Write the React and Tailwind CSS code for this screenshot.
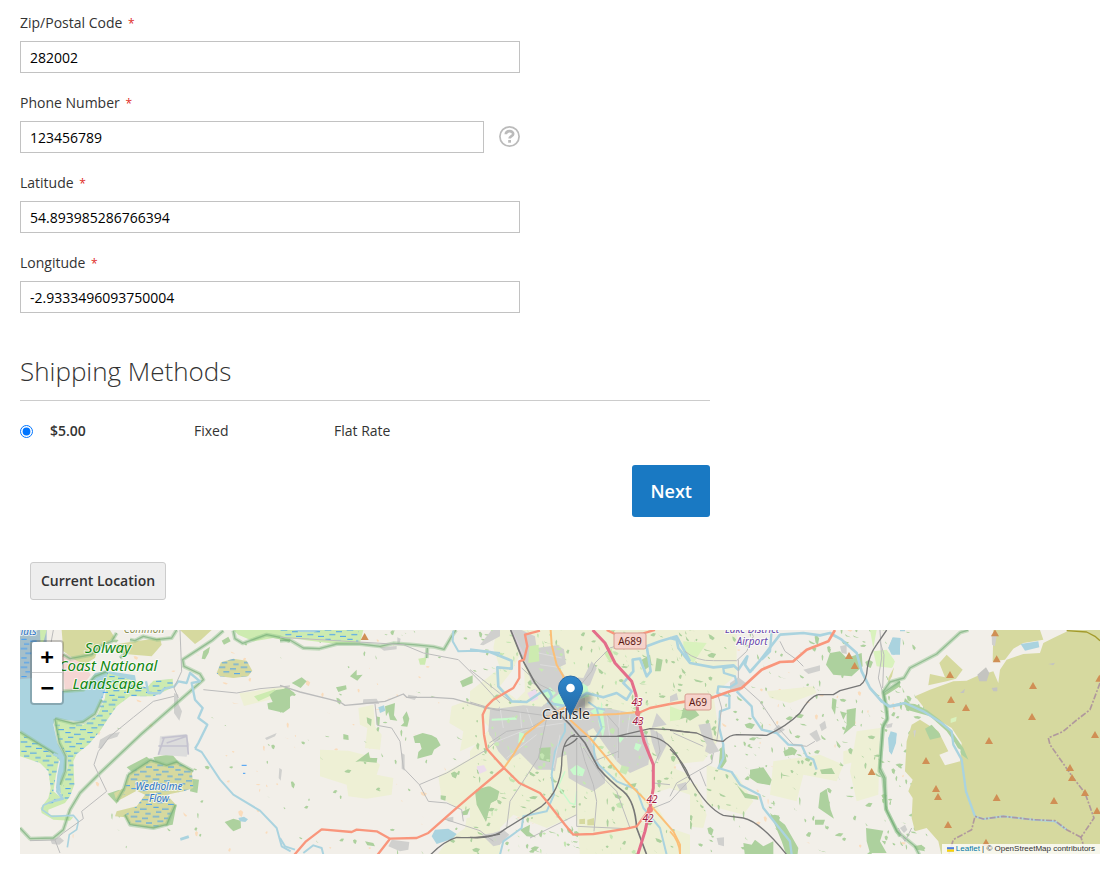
import { useState } from 'react';

// Map sheets: each one is drawn in its own coordinates and shifted by dx.
const LAND = '#f2efe9';
const FARM = '#eef0d5';
const WOOD = '#add19e';
const HEATH = '#d6d99f';
const WATER = '#aad3df';
const GRASS = '#cdebb0';
const TOWN = '#d0d0ce';
const PARK = '#c8facc';
const MARSH = 'url(#marsh)';
const GREY = '#bcbcbc';
const RAIL = '#777777';
const TRUNK = '#f9967c';
const PRIMARY = '#fbbf77';
const MOTORWAY = '#e46d8a';

const SHEETS = [
  {
    dx: 0,
    areas: [
      ['#a5bfca', 'M0 6 H80 V150 L40 160 L0 155Z'],
      [GRASS, 'M60 6 H80 L72 36 L62 60Z'],
      [WATER, 'M0 154 L40 150 L130 190 L190 185 L225 135 L258 128 L345 142 L348 160 L310 150 L262 170 L245 215 L225 255 L190 282 L105 272 L100 290 L112 345 L136 385 L138 420 L122 460 L126 500 L108 480 L112 440 L120 400 L100 378 L60 350 L0 310Z'],
      ['#f5d6d3', 'M125 78 L165 78 L190 105 L212 140 L180 185 L135 190Z'],
      [HEATH, 'M125 6 H270 L285 30 L235 60 L225 90 L195 108 L170 98 L130 70Z'],
      [HEATH, 'M280 50 L330 42 L420 30 L425 50 L395 85 L340 80 L290 75Z'],
      [HEATH, 'M480 6 H575 L545 34 L525 48Z'],
      [GRASS, 'M262 135 L345 160 L380 180 L400 158 L458 152 L460 178 L400 205 L330 205 L290 235 L262 275 L240 310 L205 350 L170 378 L160 400 L163 470 L150 505 L135 525 L85 545 L85 560 L160 568 L150 578 L100 575 L65 555 L62 540 L85 510 L92 480 L85 430 L60 405 L0 385 V312 L60 350 L95 378 L118 390 L108 440 L100 490 L125 510 L120 470 L144 420 L144 385 L118 345 L104 290 L108 274 L190 290 L232 262 L255 210Z'],
      [MARSH, 'M262 135 L345 160 L380 180 L400 158 L458 152 L460 178 L400 205 L330 205 L290 235 L262 275 L240 310 L205 350 L170 378 L160 400 L163 470 L150 505 L135 525 L120 520 L144 420 L144 385 L118 345 L104 290 L190 290 L232 262Z'],
      [MARSH, 'M0 315 L60 350 L118 390 L108 440 L100 490 L120 520 L85 530 L92 480 L85 430 L60 405 L0 385Z'],
      [MARSH, 'M0 30 H68 V70 L30 90 V155 H0Z'],
      [WOOD, 'M320 418 L380 386 L395 398 L340 436Z M400 388 L455 378 L478 404 L470 416 L410 408Z M515 452 L537 455 L532 495 L510 490Z M262 497 L298 485 L308 500 L290 527Z M450 548 L470 528 L458 590 L436 594Z'],
      [HEATH, 'M345 425 L395 395 L440 412 L470 402 L515 425 L520 480 L490 490 L440 500 L468 530 L445 570 L440 590 L400 600 L330 590 L315 568 L285 565 L290 550 L350 535 L375 500 L350 488 L310 510 L290 520 L282 495 L312 480 L325 440Z'],
      [MARSH, 'M345 425 L395 395 L440 412 L470 402 L515 425 L520 480 L490 490 L440 500 L468 530 L445 570 L440 590 L400 600 L330 590 L315 560 L350 535 L375 500 L350 488 L310 500 L325 440Z'],
      [HEATH, 'M590 135 L603 103 L640 92 L680 98 L697 128 L684 145 L640 150 L600 145Z'],
      [MARSH, 'M590 135 L603 103 L640 92 L680 98 L697 128 L684 145 L600 145Z'],
      ['#dcdcdc', 'M420 325 L498 318 L508 350 L500 386 L415 380Z'],
      [TOWN, 'M235 360 L240 335 L270 318 L300 312 L292 326 L262 336 L245 362Z M462 195 L475 200 L474 225 L486 250 L478 278 L462 255Z M90 634 L120 628 L132 638 L118 650 L96 648Z M735 330 L770 315 L765 325 L740 336Z M778 420 L786 425 L782 458 L776 450Z'],
      [FARM, 'M658 196 L775 178 L810 175 V200 L672 234Z'],
      [GRASS, 'M702 205 L765 184 L768 196 L715 220Z'],
      [WOOD, 'M748 200 L768 186 L810 180 V240 L790 254 L745 244 L742 226 L758 222Z M614 582 L640 572 L662 578 L663 600 L640 610 L630 600Z M605 38 L625 26 L632 40 L612 50Z M550 70 L570 56 L566 74 L555 94 L545 92Z'],
      [GRASS, 'M640 6 H810 V40 L760 30 L700 40 L655 20Z'],
      [WATER, 'M655 570 L672 566 L684 574 L676 582 L660 580Z M480 630 L505 622 L508 630 L482 638Z'],
    ],
    parkEdges: [
      'M0 600 L30 632 L100 630 L130 605 L150 545 L180 495 L240 435 L360 322 L550 155 L540 138 L492 115 L488 95 L575 38 L610 8',
      'M130 80 L150 92 L215 80 L240 55 L275 40 L290 15 M300 90 L318 75 M330 35 L345 38 L370 25 L410 35 L455 30 L470 6',
      'M130 190 L190 185 L225 145 L262 130 M105 272 L160 286 L190 282 L225 258 L245 215 M105 272 L118 345 L138 385 L136 430 L120 470 M0 312 L60 350 L112 382',
      'M640 8 L645 32 L668 46 L740 20 L780 28 L810 40',
      'M325 440 L392 396 L440 412 L470 402 L520 430 M315 560 L330 590 L400 600 L440 590 L466 530 M290 520 L312 482 L325 440',
    ],
    lines: [
      [WATER, 8, 'M100 378 L128 390 L118 440 L112 490 L128 512 L98 520'],
      [WATER, 5, 'M98 520 L70 532 L66 545 L95 565 L160 562 L175 580 L170 605 L148 620 L142 658'],
      [WATER, 7, 'M378 160 L385 195 L420 196 L432 182 L462 176 L475 160 L500 165 L510 135 L540 160 L515 165 L525 215 L548 240 L535 270 L562 290 L535 345 L525 362'],
      [WATER, 6, 'M525 362 L545 372 L600 455 L640 500 L720 548 L770 600 L785 655 L812 670'],
      [GREY, 3, 'M480 6 L485 130 L462 180 L475 210 M462 205 L400 220 L340 268 L270 325 L235 370 L222 410 L260 490 L185 550 L190 572 L130 615 L105 636 L30 638 M105 636 L120 675 M550 185 L650 195 L720 182 L810 174 M100 6 L92 50'],
      ['#c4c2cf', 5, 'M415 354 L505 354 M425 330 L500 322 L505 380 M432 330 L415 380 M440 345 L500 325'],
      ['#3f9cf5', 3, 'M665 412 H680 M669 436 H676'],
    ],
  },
  {
    dx: 780,
    areas: [
      [GRASS, 'M0 6 H250 L240 45 L170 48 L90 38 L0 26Z'],
      [MARSH, 'M0 6 H235 L235 42 L90 32 L0 26Z'],
      [WATER, 'M40 6 H125 L100 13 L60 12Z'],
      [FARM, 'M120 365 L205 368 L270 385 L300 410 L290 440 L340 450 L335 500 L260 512 L205 505 L200 470 L120 445Z'],
      [FARM, 'M235 240 L280 230 L285 295 L305 320 L300 365 L255 360 L262 300 L240 290Z'],
      [FARM, 'M515 235 L600 205 L610 235 L608 340 L540 370 L550 310 L508 285Z'],
      [FARM, 'M475 445 L600 375 L660 410 V684 H470 L500 640 L555 600 L560 570 L620 560 L530 540 L485 510Z'],
      [WOOD, 'M0 190 L20 178 L45 196 L20 214 L18 235 L0 255Z M35 165 L65 148 L80 160 L62 180Z M168 178 L198 172 L200 184 L175 192Z M226 402 L266 372 L270 390 L292 390 L290 404 L240 400Z M315 235 L345 225 L342 262 L352 278 L330 275 L325 252 L318 265Z M368 268 L380 250 L388 272 L382 296 L362 294 L372 284Z M400 325 L428 315 L455 322 L470 330 L482 352 L462 365 L456 380 L412 392 L415 372 L425 362 L420 345 L405 345Z M540 160 L578 142 L578 165 L548 178Z M588 485 L625 475 L635 485 L655 492 L650 515 L632 525 L618 580 L595 530Z M260 268 L275 274 L273 295 L262 285Z M288 265 L300 268 L298 292 L290 290Z M190 318 L205 322 L206 336 L190 334Z M482 502 L498 504 L496 518 L482 514Z M255 640 L280 645 L285 655 L262 652Z M545 552 L570 540 L562 560 L548 562Z M210 145 L230 125 L230 142 L248 140 L232 158Z'],
      [GRASS, 'M415 92 L440 88 L435 110 L420 110Z'],
      [WATER, 'M295 238 L312 232 L316 248 L300 255Z M455 625 L465 605 L505 602 L530 618 L518 632 L470 648Z'],
      [TOWN, 'M250 214 L290 212 L298 228 L248 228Z M298 58 L350 54 L350 64 L312 68Z M352 28 L362 32 L358 50 L352 48Z M365 375 L374 380 L374 428 L365 422Z M600 50 L635 6 H660 V25 L610 52Z M335 635 L388 642 L385 665 L360 670 L325 655Z M628 275 L660 235 V355 L628 320Z M498 570 L520 566 L520 582 L504 580Z M605 620 L660 612 V650 L640 655Z M385 200 L412 205 L404 216 L382 210Z'],
      ['#ecdcec', 'M590 415 L612 412 L620 428 L598 438Z'],
    ],
    parkEdges: ['M0 38 L30 36 L70 60 L118 62 L170 48 L240 48 L300 55 L340 46 L400 50 L460 56 L492 64 L515 25 L528 6 M442 60 L440 90'],
    lines: [
      [WATER, 6, 'M520 8 L518 40 L535 70 L590 68 L660 75 M0 630 L15 655 L45 665 M70 675 L100 652 L125 660 L130 680'],
      [GREY, 4, 'M0 172 L60 192 L150 214 L180 222 L195 232 L240 228 L315 220 L370 198 L380 208 L460 208 L520 212 L620 240 L660 248'],
      [GREY, 3, 'M285 228 L292 292 L335 300 L360 340 L370 420 L418 470 L445 520 L500 525 L545 545 L550 580 M418 470 L500 435 L620 365 L660 330 M0 28 L370 50 L430 75 L535 95 L600 160 L660 225 M490 572 L600 608 L640 640'],
      [RAIL, 4, 'M452 680 Q490 640 530 628 Q600 632 660 618'],
    ],
  },
  {
    dx: 1350,
    areas: [
      [FARM, 'M80 6 H660 V120 L620 130 L660 190 V340 L610 420 L660 440 V684 H330 L320 560 L230 600 L130 560 L90 600 L0 620 V370 L60 300 L0 240 V190 L90 120 L70 60Z'],
      [LAND, 'M540 500 L600 480 L660 500 V620 L600 600Z M160 60 L125 130 L90 175 L140 215 L165 190Z'],
      [TOWN, 'M125 6 H155 L195 25 L200 60 L262 52 L282 64 L288 108 L268 118 L285 145 L340 150 L365 100 L380 120 L360 170 L330 190 L345 210 L345 240 L410 240 L500 258 L512 300 L530 325 L540 370 L535 410 L480 435 L440 400 L400 345 L370 300 L352 310 L385 400 L405 440 L405 465 L370 490 L330 470 L296 450 L290 380 L262 390 L255 430 L240 425 L200 425 L150 375 L112 400 L85 370 L55 310 L60 245 L160 232 L215 236 L235 220 L210 180 L185 165 L165 100 L145 70Z'],
      [TOWN, 'M540 300 L575 320 L590 350 L565 400 L545 340Z M70 615 L100 605 L118 620 L90 650 L72 640Z M560 255 L590 290 L545 300Z'],
      [WOOD, 'M208 360 L242 358 L240 402 L208 395Z M15 490 L60 475 L88 490 L82 515 L62 525 L48 582 L20 530Z M515 95 L540 80 L545 110 L525 125Z M560 90 L578 95 L572 130 L555 130Z M150 605 L180 590 L178 612 L198 628 L170 625Z M615 250 L650 245 L660 265 L625 275Z M470 470 L500 465 L495 478Z'],
      [GRASS, 'M178 55 L206 50 L208 100 L175 105Z M402 75 L425 60 L432 95 L420 105Z'],
      [PARK, 'M215 190 L240 178 L258 195 L240 212 L218 205Z M245 215 L275 190 L290 225 L262 240Z M330 160 L352 175 L358 205 L322 215Z M395 220 L405 300 L398 330 L385 280Z M360 250 L385 235 L405 250 L375 262Z M300 425 L320 410 L345 425 L338 445 L310 440Z M65 272 L140 268 L140 275 L65 278Z M497 345 L515 350 L505 370 L492 362Z M440 325 L462 330 L450 345Z M148 312 L166 318 L162 342 L145 345Z'],
      ['#c9e8b5', 'M75 340 L88 345 L85 355 L72 352Z M205 120 L222 124 L215 132Z M455 412 L478 418 L468 440 L448 432Z'],
      [HEATH, 'M328 574 L345 572 L345 588 L328 588Z M352 575 L372 570 L372 592 L352 592Z'],
      ['#ecdcec', 'M20 420 L40 412 L50 426 L30 436Z M172 195 L198 182 L205 212 L185 222Z'],
    ],
    parkEdges: [],
    lines: [
      [PARK, 4, 'M285 430 L265 475 L300 525 L315 530 L320 490'],
      [WATER, 8, 'M0 65 L60 72 L125 98 L125 122 L82 118 L85 175 L125 220 L170 222 L210 195 L235 185 L245 205 L235 225 L290 235 L350 195 L400 208 L440 195 L470 215 L485 190 L460 165 L490 130 L488 95 L510 92 L530 145 L542 130 L530 55 L570 40 L620 25 L660 100'],
      [WATER, 6, 'M285 285 L285 310 L255 370 L245 440 L252 500 L230 550 L160 565 L155 600 L100 640 L90 680 M380 240 L395 300 L370 340 L375 400 L440 460 L500 485 L520 540 L570 600 L590 680 M355 222 L380 240 L405 245'],
      ['#e2e2e2', 2, 'M70 345 L180 300 L280 285 M110 390 L200 320 M150 250 L155 300 M205 75 L275 90 M210 110 L280 120 M410 260 L420 330 M450 250 L440 400 M330 350 L400 440 M480 260 L470 330 M170 240 L190 300 M90 240 L100 300 M270 320 L250 420'],
      [GREY, 3, 'M0 125 L120 220 M0 222 L60 240 L220 262 L290 270 M58 345 L110 310 L180 300 L240 265 M230 270 L205 390 L120 520 L110 600 L75 620 M320 330 L320 595 M330 345 L345 400 L370 470 L380 520 L372 610 M340 360 L400 450 L440 490 L480 600 M320 595 L470 602 M325 180 L365 130 L375 105 L420 60 L450 50 M155 120 L210 170 L250 190 M410 260 L445 300 L445 390 M445 370 L370 400 M560 310 L570 370 L545 430 M600 470 L550 465 M550 540 L600 520 L660 455 M180 630 L320 560'],
      ['#dcd0dc', 6, 'M122 6 L160 80'],
      [RAIL, 5, 'M122 6 L160 100 L195 165 L250 240 L300 290 L345 345 L385 420 Q420 460 460 490 Q495 520 500 600 L530 680'],
      [RAIL, 4, 'M0 628 Q70 635 110 600 L215 535 Q270 490 275 410 Q275 330 315 320 M285 355 Q310 345 322 330 M300 325 L440 325 L540 302 L600 305 L660 313 M440 325 L540 325 Q600 335 630 400 L660 455'],
      [PRIMARY, 6, 'M242 6 L245 50 L260 110 L280 145 L290 235 L230 270 L165 320 L130 380 L102 420 M290 235 L360 262 L440 258 L505 252 M300 275 L360 330 L470 460 L540 530 L610 610 L630 650 L630 684'],
    ],
  },
  {
    dx: 1950,
    areas: [
      [FARM, 'M0 6 H200 V140 L130 200 L150 330 L100 400 L0 410Z M290 190 L430 175 L440 195 L360 225 L300 210Z M310 400 L450 380 L520 410 L500 460 L400 440 L380 520 L300 500Z M560 310 L630 300 L625 500 L560 520 L540 430Z M110 410 L200 440 L250 520 L220 560 L110 530Z M0 440 L80 470 L110 560 L100 600 L0 590Z M520 370 L560 360 V400 L520 410Z'],
      ['#d9f2bd', 'M40 40 L110 45 L90 75 L70 105 L40 80Z M0 235 L40 250 L30 275 L0 280Z M610 70 L650 65 L672 95 L665 120 L620 115Z M600 6 H620 L610 60Z'],
      [HEATH, 'M655 150 L672 118 L666 145 L655 165Z'],
      [WOOD, 'M480 75 L510 70 L530 90 L575 75 L578 115 L545 145 L490 140 L468 110Z M530 245 L558 240 L555 290 L520 320 L530 290Z M487 210 L500 215 L495 260 L485 240Z M240 425 L280 418 L305 455 L300 472 L262 465 L240 450Z M450 495 L470 482 L482 545 L492 572 L445 540Z M588 600 L640 608 L630 640 L650 675 H600 L590 640Z M220 645 L245 650 L255 635 L280 655 L310 640 L310 684 H225Z M300 555 L345 590 L385 660 L382 684 H350 L335 640Z M145 425 L150 370 L160 345 L170 400 L155 422Z M200 470 L225 495 L262 505 L265 515 L225 510Z M435 575 L465 575 L460 590 L435 590Z M340 370 L365 358 L368 380 L345 385Z M450 425 L485 420 L495 438 L455 438Z M40 240 L75 245 L88 262 L60 278 L35 260Z M640 200 L690 160 V175 L650 200Z M510 250 L530 255 L520 275Z'],
      [TOWN, 'M85 290 L120 285 L130 340 L148 370 L120 378 L105 370 L110 350 L95 320Z M180 165 L205 148 L228 165 L210 190 L180 192Z M400 125 L450 112 L450 128 L415 138Z M448 290 L465 278 L470 300 L455 310Z M310 305 L325 290 L345 305 L325 318Z M418 318 L440 305 L452 335 L440 342Z M510 55 L530 50 L530 78 L515 75Z M20 470 L48 462 L52 485 L30 488Z M140 630 L162 628 L162 655 L145 650Z M0 205 L20 195 L25 215 L0 222Z'],
      [WATER, 'M655 60 L668 30 L690 30 V80 L665 80Z M655 330 L662 310 L680 315 L678 345 L665 380 L657 370Z'],
    ],
    parkEdges: ['M690 160 L640 195 L652 270 L640 290 L628 430 L640 450 L648 545 L690 625'],
    lines: [
      [WATER, 8, 'M0 30 L20 35 L25 60 L60 105 L130 118 L190 112 L205 125 L232 85 L225 110 L240 132 L268 100 L330 20 L400 15 L450 22 L480 15 L515 35 L560 75 L575 130 L590 160 L600 180 L635 220 L660 235 L690 230'],
      [WATER, 7, 'M305 6 L300 70 L275 95 M190 115 L160 120 L162 135 L195 145 L200 165 L180 178 L145 175 L142 195 L178 205 L178 240 L150 250 L148 300 L160 350 L160 390 L145 420 L185 432 L210 470 L268 500 L280 540 L320 590 L360 640 L365 680 M200 190 L245 235 L248 265 L275 305 L320 315 L355 350 L395 352 L410 385 L430 395 L440 425'],
      [GREY, 3, 'M45 70 Q80 100 130 98 H200 L230 70 L250 25 L240 6 M205 95 V150 M220 175 L270 220 L320 295 L370 350 L410 355 L435 340 M145 205 L155 240 L140 340 M10 315 L100 355 M130 375 L125 405 L20 465 L0 505 M90 430 L108 475 M630 6 L635 90 L625 150 L640 200 M330 40 L345 70 L380 95 L400 115'],
      [RAIL, 4, 'M0 307 L80 315 Q130 340 160 340 Q180 320 200 320 L290 322 Q350 295 390 255 Q420 205 445 200 L490 200 L510 188 L570 172 Q590 160 592 120 Q598 80 620 50 L650 6'],
      [RAIL, 4, 'M0 363 Q40 400 60 450 Q110 540 160 562 L220 570 Q270 580 350 680'],
      [TRUNK, 8, 'M0 228 L50 220 L130 208 L180 190 L215 180 L275 125 L330 102 L370 100 L410 65 L475 40 L495 6'],
      [PRIMARY, 5, 'M0 610 Q30 640 30 684'],
    ],
  },
  {
    dx: 2580,
    areas: [
      [HEATH, 'M105 205 L150 185 L220 160 L260 158 L290 145 L340 130 L355 165 L360 125 L380 95 L430 78 L480 75 L490 45 L520 30 L570 6 H660 V684 H185 L175 640 L158 620 L140 600 L105 610 L95 570 L98 510 L85 490 L98 455 L75 430 L80 340 L95 290 L120 275 L175 310 L205 370 L178 380 L195 412 L240 400 L245 345 L215 300 L150 262Z'],
      [HEATH, 'M178 105 L200 80 L248 125 L228 152 L200 160 L145 172 L150 138 L195 148Z M340 12 V6 H480 L490 35 L430 45 L400 62 L375 95 L338 100Z'],
      [WOOD, 'M135 302 L155 290 L180 318 L182 328 L150 335Z M70 225 L105 228 L140 245 L180 275 L215 310 L250 360 L265 395 L245 380 L225 345 L200 310 L150 265 L80 245Z M75 210 L90 225 L70 230Z M100 655 L125 650 L135 670 L110 665Z M5 638 L18 640 L15 650Z'],
      ['#d9f2bd', 'M5 90 L20 75 L45 100 L38 118 L5 115Z M212 272 L230 266 L228 280 L212 285Z'],
      [LAND, 'M215 350 L242 365 L238 400 L222 390Z'],
      [TOWN, 'M335 20 L350 25 L345 55 L336 50Z M60 600 L75 590 L82 605 L72 615Z M18 290 L38 285 L35 298 L20 300Z M100 308 L108 306 L104 330Z'],
      ['#c4c4c0', 'M292 140 L318 118 L328 135 L320 160 L298 160Z M335 180 L352 178 L352 190 L340 190Z M240 195 L255 182 L252 195Z M505 108 L525 104 L520 112Z'],
      [WATER, 'M25 60 L38 28 L62 30 L60 60 L42 82Z M422 48 L475 40 L478 58 L435 68Z M25 330 L35 312 L50 318 L45 345 L35 378 L28 370Z M60 6 H75 V10 H60Z'],
    ],
    parkEdges: ['M265 6 L240 14 L170 78 L90 120 L72 150 L30 162 L10 190 L20 240 L22 275 L8 300 L0 420 L15 450 L18 542 L50 610 L105 655 L118 680'],
    lines: [
      [WATER, 7, 'M0 215 L25 235 L75 225 L130 250 L185 285 L215 310 L220 350 L245 395 L258 490 L285 565'],
      [WATER, 6, 'M285 565 L310 573 L370 565 L460 575 L525 580 L560 605'],
      ['#a39b2c', 4, 'M560 8 L620 12 L645 25 L660 38'],
      [GREY, 3, 'M0 40 L12 80 L8 180 M55 600 L75 640 L95 600'],
    ],
    borders: [
      'M660 165 L630 245 L585 280 L550 310 L505 330 L510 350 L580 450 L615 495 L642 570 L603 628 L610 650',
      'M603 628 L560 605 L525 578 L460 575 L370 565 L310 573 L285 565 L275 605 L220 635 L205 684',
    ],
  },
];

const TRUNK_ROADS =
  'M820 684 L858 640 L905 604 L995 612 L1010 605 L1070 610 L1110 632 L1190 630 L1225 615 L1310 540 L1350 505 L1452 420 L1400 362 L1392 320 L1388 260 L1400 235 L1420 215 L1480 180 L1498 150 L1498 100 L1512 95 L1522 55 L1515 20 L1560 8 M1110 632 L1070 684 M1452 420 L1498 465 L1560 495 L1580 520 L1635 590 L1660 620 L1720 618 L1820 602 L1850 595 L1865 575 L1888 545 M1855 255 L1890 240 L1950 228 M1760 6 L1800 25 L1870 16 L1905 6';
const MOTORWAY_ROAD = 'M1718 6 L1755 45 L1785 105 L1835 160 L1848 200 L1855 270 L1872 340 L1900 410 L1900 480 L1888 550 L1875 610 L1852 684';

const PEAKS = [
  [1034, 27], [2487, 84], [2504, 114], [2555, 432], [2925, 16], [2930, 94], [2790, 141], [2793, 216], [2838, 240],
  [3039, 174], [3036, 267], [2907, 339], [2718, 399], [2748, 483], [2754, 507], [2930, 510], [3102, 519],
  [3225, 321], [3150, 420], [3156, 450], [3195, 495], [3231, 549], [2784, 591], [2898, 644], [3238, 152],
];

// Repeatable pseudo random numbers, so the copses and hamlets stay in place.
function scatter(count, seed, minX, maxX, size) {
  let s = seed;
  const next = () => {
    s = (s * 16807) % 2147483647;
    return s / 2147483647;
  };
  const shapes = [];
  for (let i = 0; i < count; i++) {
    const x = minX + next() * (maxX - minX);
    const y = next() * 684;
    const w = size * (0.4 + next() * next() * 2.6);
    const h = size * (0.3 + next() * next() * 2);
    const tilt = (next() - 0.5) * size * 1.6;
    shapes.push(`M${x} ${y} l${w * 0.5} ${tilt} l${w * 0.5} ${h * 0.4} l${-w * 0.3} ${h * 0.6 - tilt} l${-w * 0.5} ${-h * 0.3}Z`);
  }
  return shapes.join(' ');
}

const COPSES =
  scatter(70, 77, 780, 1400, 9) + scatter(260, 4242, 1350, 2000, 10) + scatter(300, 919, 1950, 2720, 11) + scatter(30, 31, 250, 800, 8);
const HAMLETS = scatter(170, 1234, 120, 2720, 8);
const CITY_GREENS = scatter(170, 555, 1410, 1880, 8);

const LABEL_FONT = "font-['Noto_Sans','Open_Sans',sans-serif]";

function MapDrawing() {
  return (
    <svg
      viewBox="0 0 1080 224"
      preserveAspectRatio="xMidYMid slice"
      className="block h-full w-full"
      role="img"
      aria-label="Map of Carlisle"
    >
      <defs>
        <pattern id="marsh" width="66" height="56" patternUnits="userSpaceOnUse">
          <path d="M2 6 H22 M36 11 H54 M16 20 H34 M48 25 H66 M4 34 H20 M30 39 H50 M12 48 H28 M46 53 H62" stroke="#3f9cf5" strokeWidth="3" />
        </pattern>
        <linearGradient id="pin" x1="0" y1="0" x2="0" y2="1">
          <stop offset="0" stopColor="#2e86cb" />
          <stop offset="1" stopColor="#2369a5" />
        </linearGradient>
        <filter id="soft" x="-50%" y="-50%" width="200%" height="200%">
          <feGaussianBlur stdDeviation="2" />
        </filter>
      </defs>
      <rect width="1080" height="224" fill={LAND} />

      <g transform="scale(0.33333) translate(0 -6)" fill="none" strokeLinejoin="round">
        <path d={HAMLETS} fill="#fadcbc" />
        {SHEETS.map(sheet => (
          <g key={sheet.dx} transform={`translate(${sheet.dx} 0)`}>
            {sheet.areas.filter(([color]) => color === FARM).map(([color, d], i) => (
              <path key={i} d={d} fill={color} />
            ))}
          </g>
        ))}
        <path d={COPSES} fill={WOOD} />
        {SHEETS.map(sheet => (
          <g key={sheet.dx} transform={`translate(${sheet.dx} 0)`}>
            {sheet.areas.filter(([color]) => color !== FARM).map(([color, d], i) => (
              <path key={i} d={d} fill={color} />
            ))}
          </g>
        ))}
        <path d={CITY_GREENS} fill="#c4e6b2" />
        {SHEETS.map(sheet => (
          <g key={sheet.dx} transform={`translate(${sheet.dx} 0)`}>
            {sheet.parkEdges.map((d, i) => (
              <g key={i}>
                <path d={d} stroke="#8fc48c" strokeOpacity="0.45" strokeWidth="12" />
                <path d={d} stroke="#6fa873" strokeOpacity="0.6" strokeWidth="4" />
              </g>
            ))}
            {sheet.lines.map(([color, width, d], i) => (
              <path key={i} d={d} stroke={color} strokeWidth={width} />
            ))}
            {sheet.borders?.map((d, i) => (
              <path key={i} d={d} stroke="#a98d9c" strokeWidth="5" strokeDasharray="18 5 6 5" strokeOpacity="0.85" />
            ))}
          </g>
        ))}
        <path d={TRUNK_ROADS} stroke={TRUNK} strokeWidth="7" />
        <path d={MOTORWAY_ROAD} stroke={MOTORWAY} strokeWidth="9" />
        <circle cx="1853" cy="255" r="8" fill="#ee8180" />
        <circle cx="1890" cy="545" r="9" fill="#ee8180" />
        {PEAKS.map(([x, y]) => (
          <path key={`${x}-${y}`} d={`M${x} ${y - 12} l12 21 h-24Z`} fill="#d08f55" />
        ))}
      </g>

      <g className={LABEL_FONT} textAnchor="middle" stroke="#ffffff" strokeOpacity="0.7" strokeWidth="2" paintOrder="stroke" strokeLinejoin="round">
        <g fontSize="15" fontStyle="italic" fill="#118811">
          <text x="88" y="23">Solway</text>
          <text x="88" y="41">Coast National</text>
          <text x="88" y="59">Landscape</text>
        </g>
        <g fontSize="10" fontStyle="italic" fill="#2f74c4">
          <text x="139" y="160">Wedholme</text>
          <text x="139" y="172">Flow</text>
          <text x="7" y="5">flats</text>
        </g>
        <text x="124" y="3" fontSize="10" fontStyle="italic" fill="#8b8c4c">Common</text>
        <g fontSize="10" fontStyle="italic" fill="#6644aa">
          <text x="732" y="3">Lake District</text>
          <text x="732" y="15">Airport</text>
        </g>
        <g fontSize="10" fontStyle="italic" fill="#a01840">
          <text x="617" y="76">43</text>
          <text x="618" y="95">43</text>
          <text x="632" y="173">42</text>
          <text x="628" y="192">42</text>
        </g>
        <text x="546" y="89" fontSize="14" fill="#2b2b2b">Carlisle</text>
      </g>

      <g className={LABEL_FONT} fontSize="10" textAnchor="middle" fill="#5c1a14">
        <rect x="594" y="3" width="32" height="16" rx="2" fill="#f6d3cb" stroke="#d69c90" />
        <text x="610" y="15">A689</text>
        <rect x="665" y="64" width="26" height="16" rx="2" fill="#f6d3cb" stroke="#d69c90" />
        <text x="678" y="76">A69</text>
      </g>

      <path d="M551 84 L558 68 Q566 60 572 66 Q573 73 562 79Z" fill="#000000" opacity="0.3" filter="url(#soft)" />
      <path
        d="M550.5 85.5 L541.5 67 C539.5 63.5 538.5 61.5 538.5 58 A12 12 0 0 1 562.5 58 C562.5 61.5 561.5 63.5 559.5 67Z"
        fill="url(#pin)"
        stroke="#2a6da8"
        strokeLinejoin="round"
      />
      <circle cx="550.5" cy="58" r="4.3" fill="#ffffff" />
    </svg>
  );
}

function Field({ id, label, defaultValue, children }) {
  return (
    <div>
      <label htmlFor={id} className="block text-sm leading-5">
        {label} <span className="ml-0.5 text-xs text-[#e02b27]">*</span>
      </label>
      <div className="mt-2 flex items-center">
        <input
          id={id}
          type="text"
          defaultValue={defaultValue}
          className="h-8 w-full min-w-0 flex-1 border border-[#c2c2c2] bg-white px-[9px] text-sm text-black outline-none"
        />
        {children}
      </div>
    </div>
  );
}

export default function App() {
  const [method, setMethod] = useState('flatrate');

  return (
    <div className="bg-white px-5 pt-[13px] pb-6 font-['Open_Sans',sans-serif] text-sm text-[#333333]">
      <main className="w-2/3 pr-[30px]">
        <form className="max-w-[500px] space-y-5">
          <Field id="postcode" label="Zip/Postal Code" defaultValue="282002" />
          <Field id="telephone" label="Phone Number" defaultValue="123456789">
            <button type="button" aria-label="What is this for?" className="ml-[15px]">
              <svg viewBox="0 0 21 22" className="block h-[22px] w-[21px]" fill="none" stroke="#bbbbbb">
                <circle cx="10.5" cy="10.5" r="9.6" strokeWidth="1.7" />
                <path d="M6.8 8.2 C7 4.2 14.2 4.2 14.2 7.9 C14.2 10.2 10.6 10 10.6 12.6" strokeWidth="2.7" />
                <path d="M10.6 14 V16.7" strokeWidth="2.8" />
              </svg>
            </button>
          </Field>
          <Field id="latitude" label="Latitude" defaultValue="54.893985286766394" />
          <Field id="longitude" label="Longitude" defaultValue="-2.9333496093750004" />
        </form>

        <h2 className="mt-10 border-b border-[#cccccc] pb-[11px] text-[26px] leading-9 font-light">Shipping Methods</h2>

        <table className="mt-5 w-full table-fixed text-left">
          <colgroup>
            <col className="w-5" />
            <col className="w-[144px]" />
            <col className="w-[140px]" />
            <col />
          </colgroup>
          <tbody>
            <tr>
              <td>
                <input
                  id="flatrate"
                  type="radio"
                  name="shipping_method"
                  aria-label="Flat Rate, Fixed, $5.00"
                  checked={method === 'flatrate'}
                  onChange={() => setMethod('flatrate')}
                  className="block h-[13px] w-[13px]"
                />
              </td>
              <td className="px-[10px] font-semibold">
                <label htmlFor="flatrate">$5.00</label>
              </td>
              <td className="px-[10px]">Fixed</td>
              <td className="px-[10px]">Flat Rate</td>
            </tr>
          </tbody>
        </table>

        <div className="mt-6 flex justify-end">
          <button type="button" className="rounded-[3px] bg-[#1979c3] px-[18px] py-[14px] text-lg leading-6 font-semibold text-white">
            Next
          </button>
        </div>
      </main>

      <button
        type="button"
        className="mt-[45px] ml-[10px] block rounded-[3px] border border-[#cccccc] bg-[#eeeeee] px-[10px] py-2 text-sm leading-5 font-semibold"
      >
        Current Location
      </button>

      <section className="relative mt-[30px] h-56 overflow-hidden">
        <MapDrawing />
        <div className="absolute top-[10px] left-[10px] rounded border-2 border-black/20 bg-clip-padding font-['DejaVu_Sans_Mono',monospace] text-[22px] leading-[30px] font-bold text-black">
          <button type="button" aria-label="Zoom in" className="block h-[31px] w-[30px] rounded-t-xs border-b border-[#cccccc] bg-white">
            +
          </button>
          <button type="button" aria-label="Zoom out" className="block h-[30px] w-[30px] rounded-b-xs bg-white">
            −
          </button>
        </div>
        <div className="absolute right-0 bottom-0 flex items-center bg-white/80 px-[5px] font-['Liberation_Sans',sans-serif] text-[8px] leading-[10px] text-[#333333]">
          <a href="#leaflet" className="flex items-center text-[#0078a8]">
            <svg viewBox="0 0 12 8" className="mr-[2px] h-[5px] w-[7px]">
              <path fill="#4c7be1" d="M0 0h12v4H0z" />
              <path fill="#ffd500" d="M0 4h12v3H0z" />
              <path fill="#e0bc00" d="M0 7h12v1H0z" />
            </svg>
            Leaflet
          </a>
          <span className="whitespace-pre"> | © OpenStreetMap contributors</span>
        </div>
      </section>
    </div>
  );
}
